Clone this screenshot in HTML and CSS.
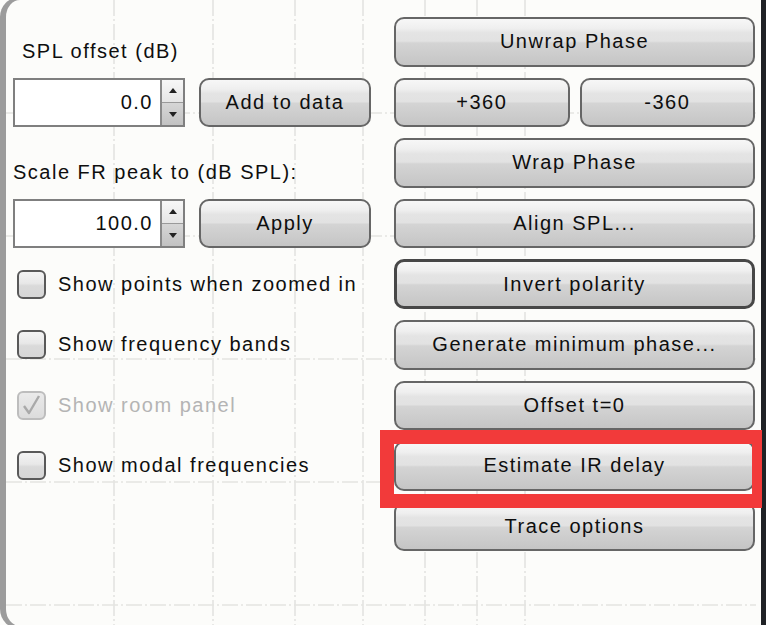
FILE: index.html
```html
<!DOCTYPE html>
<html>
<head>
<meta charset="utf-8">
<link rel="stylesheet" href="styles.css">
</head>
<body>
<div class="window">
  <svg class="grid" width="750" height="626" viewBox="0 0 750 626">
    <g class="grid-lines">
      <line x1="108" y1="0" x2="108" y2="626"/>
      <line x1="207" y1="0" x2="207" y2="626"/>
      <line x1="289" y1="0" x2="289" y2="626"/>
      <line x1="357" y1="0" x2="357" y2="626"/>
      <line x1="419" y1="0" x2="419" y2="626"/>
      <line x1="471" y1="0" x2="471" y2="626"/>
      <line x1="519" y1="0" x2="519" y2="626"/>
      <line x1="0" y1="113" x2="750" y2="113"/>
      <line x1="0" y1="236" x2="750" y2="236"/>
      <line x1="0" y1="359" x2="750" y2="359"/>
      <line x1="0" y1="482" x2="750" y2="482"/>
      <line x1="0" y1="605" x2="750" y2="605"/>
    </g>
  </svg>
  <div class="layout">
    <div class="label label-indent">SPL offset (dB)</div>
    <button class="btn">Unwrap Phase</button>

    <div class="field-row">
      <div class="spinner">
        <span class="spin-value">0.0</span>
        <span class="spin-arrows"><span class="spin-up"></span><span class="spin-down"></span></span>
      </div>
      <button class="btn">Add to data</button>
    </div>
    <div class="btn-pair">
      <button class="btn">+360</button>
      <button class="btn">-360</button>
    </div>

    <div class="label">Scale FR peak to (dB SPL):</div>
    <button class="btn">Wrap Phase</button>

    <div class="field-row">
      <div class="spinner">
        <span class="spin-value">100.0</span>
        <span class="spin-arrows"><span class="spin-up"></span><span class="spin-down"></span></span>
      </div>
      <button class="btn">Apply</button>
    </div>
    <button class="btn">Align SPL...</button>

    <div class="check-row"><span class="checkbox"></span><span>Show points when zoomed in</span></div>
    <button class="btn btn-focus">Invert polarity</button>

    <div class="check-row"><span class="checkbox"></span><span>Show frequency bands</span></div>
    <button class="btn">Generate minimum phase...</button>

    <div class="check-row disabled"><span class="checkbox checked"><svg width="24" height="24" viewBox="0 0 24 24"><polyline points="4,13 9,20 19,3"/></svg></span><span>Show room panel</span></div>
    <button class="btn">Offset t=0</button>

    <div class="check-row"><span class="checkbox"></span><span>Show modal frequencies</span></div>
    <div class="highlight-cell">
      <button class="btn">Estimate IR delay</button>
      <div class="highlight-box"></div>
    </div>

    <div></div>
    <button class="btn">Trace options</button>
  </div>
</div>
</body>
</html>
```
FILE: styles.css
```css
html, body {
  margin: 0;
  padding: 0;
}
body {
  width: 766px;
  height: 625px;
  overflow: hidden;
  background: #fcfcfa;
  font-family: "Liberation Sans", Arial, sans-serif;
  font-size: 20px;
  letter-spacing: 1.5px;
  color: #0e0e0e;
}
.window {
  position: relative;
  box-sizing: border-box;
  width: 766px;
  height: 632px;
  margin-top: -3px;
  border-top: 3px solid #9c9c9c;
  border-bottom: 3px solid #9c9c9c;
  border-left: 6px solid #9c9c9c;
  border-right: 5px solid #202226;
  border-radius: 20px 0 0 20px;
  background: #fcfcfa;
}
.grid {
  position: absolute;
  top: 0;
  left: 0;
}
.grid-lines line {
  stroke: #e3e3e1;
  stroke-width: 1.6;
  stroke-dasharray: 16 3 2 3;
}
.layout {
  position: relative;
  display: grid;
  grid-template-columns: 381px 361px;
  grid-auto-rows: 49.6px;
  row-gap: 11px;
  padding: 17px 0 0 7px;
}
.label {
  align-self: end;
  line-height: 22px;
  padding-bottom: 5px;
  white-space: nowrap;
}
.label-indent {
  padding-left: 9px;
}
.btn {
  box-sizing: border-box;
  display: flex;
  align-items: center;
  justify-content: center;
  margin: 0;
  padding: 0;
  height: 100%;
  width: 100%;
  font: inherit;
  letter-spacing: inherit;
  color: #0e0e0e;
  border: 2px solid #666666;
  border-radius: 10px;
  background: linear-gradient(to bottom, #f7f7f7 0%, #efefef 20%, #e4e4e4 30%, #e2e2e2 48%, #d4d4d4 52%, #cdcdcd 75%, #c5c5c5 100%);
  white-space: nowrap;
}
.btn-focus {
  border: 3px solid #474747;
}
.field-row {
  display: flex;
  gap: 14px;
  width: 358px;
}
.field-row .btn {
  flex: 1;
}
.btn-pair {
  display: flex;
  gap: 10px;
}
.btn-pair .btn {
  flex: 1;
}
.spinner {
  box-sizing: border-box;
  display: flex;
  width: 172px;
  height: 100%;
  border: 2px solid #7f7f7f;
  background: #ffffff;
}
.spin-value {
  flex: 1;
  display: flex;
  align-items: center;
  justify-content: flex-end;
  padding-right: 7px;
}
.spin-arrows {
  display: flex;
  flex-direction: column;
  width: 21px;
  border-left: 2px solid #8a8a8a;
}
.spin-up, .spin-down {
  flex: 1;
  display: flex;
  align-items: center;
  justify-content: center;
}
.spin-up {
  background: linear-gradient(to bottom, #f7f7f7, #e6e6e6);
  border-bottom: 1px solid #9a9a9a;
}
.spin-down {
  background: linear-gradient(to bottom, #d6d6d6, #c2c2c2);
}
.spin-up::before {
  content: "";
  border-left: 4px solid transparent;
  border-right: 4px solid transparent;
  border-bottom: 5px solid #222;
}
.spin-down::before {
  content: "";
  border-left: 4px solid transparent;
  border-right: 4px solid transparent;
  border-top: 5px solid #222;
}
.check-row {
  display: flex;
  align-items: center;
  gap: 12px;
  padding-left: 4px;
  white-space: nowrap;
}
.checkbox {
  box-sizing: border-box;
  display: flex;
  align-items: center;
  justify-content: center;
  width: 29px;
  height: 29px;
  border: 2px solid #595959;
  border-radius: 6px;
  background: linear-gradient(to bottom, #f3f3f3 0%, #e8e8e8 45%, #dadada 55%, #d6d6d6 100%);
}
.disabled {
  color: #b4b4b4;
}
.disabled .checkbox {
  border-color: #bdbdbd;
  background: linear-gradient(to bottom, #eaeaea, #dcdcdc);
}
.checkbox polyline {
  fill: none;
  stroke: #a9a9a9;
  stroke-width: 2.4;
  stroke-linejoin: round;
}
.highlight-cell {
  position: relative;
}
.highlight-box {
  position: absolute;
  top: -11px;
  left: -14px;
  right: -7px;
  bottom: -17px;
  border-style: solid;
  border-color: #f23a3a;
  border-width: 14px 10px 14px 14px;
  pointer-events: none;
}
```
